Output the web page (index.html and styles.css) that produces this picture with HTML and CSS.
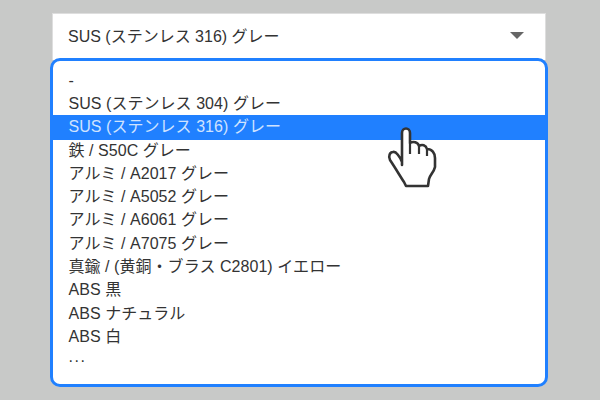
FILE: index.html
```html
<!DOCTYPE html>
<html lang="ja">
<head>
    <meta charset="UTF-8">
    <title>Material select</title>
    <link rel="stylesheet" href="styles.css">
</head>
<body>

<div class="select-box">
    <span>SUS (ステンレス 316) グレー</span>
    <span class="arrow"></span>
</div>

<ul class="option-list">
    <li>-</li>
    <li>SUS (ステンレス 304) グレー</li>
    <li class="selected">SUS (ステンレス 316) グレー</li>
    <li>鉄 / S50C グレー</li>
    <li>アルミ / A2017 グレー</li>
    <li>アルミ / A5052 グレー</li>
    <li>アルミ / A6061 グレー</li>
    <li>アルミ / A7075 グレー</li>
    <li>真鍮 / (黄銅・ブラス C2801) イエロー</li>
    <li>ABS 黒</li>
    <li>ABS ナチュラル</li>
    <li>ABS 白</li>
    <li class="more">...</li>
</ul>

<!-- Hand cursor over the list -->
<svg class="hand" width="80" height="85" viewBox="0 0 80 85">
    <path d="M32 23 C32 17 40 17 40 23 L40 33 C43 31 48 32 49 36 C52 34 56 35 57 39 C62 39 65 43 65 48 L65 57 C64 62 60 65 59 69 L58 76 L36 76 L34 72 C30 66 26 59 20 50 C18 46 20 42 23 42 C26 41 30 47 32 52 L32 55 Z" fill="#fff" stroke="#333" stroke-width="2.6" stroke-linejoin="round"/>
    <path d="M40 33 L40 44 M49 36 L49 44 M57 39 L57 46" fill="none" stroke="#333" stroke-width="2.2"/>
</svg>

</body>
</html>
```

FILE: styles.css
```css
body {
    margin: 0;
    width: 600px;
    height: 400px;
    overflow: hidden;
    position: relative;
    padding-top: 13px;
    box-sizing: border-box;
    background-color: #c8c9c8;
    color: #333;
    font-family: "Liberation Sans", "Noto Sans CJK JP", sans-serif;
    font-size: 16px;
}

.select-box {
    display: flex;
    justify-content: space-between;
    align-items: center;
    width: 494px;
    height: 47px;
    margin-left: 52px;
    padding: 0 21px 4px 15px;
    box-sizing: border-box;
    background-color: #fff;
    border: 1px solid #dedede;
    border-bottom: none;
}

.arrow {
    width: 0;
    height: 0;
    border-left: 7px solid transparent;
    border-right: 7px solid transparent;
    border-top: 7px solid #666;
}

.option-list {
    list-style: none;
    width: 498px;
    height: 329px;
    margin: -2px 0 0 50px;
    padding: 7.7px 0 0;
    box-sizing: border-box;
    background-color: #fff;
    border: 3px solid #2080ff;
    border-radius: 10px;
    position: relative;
}

.option-list li {
    height: 23.3px;
    line-height: 23.3px;
    padding-left: 15.5px;
    letter-spacing: 0.05px;
    white-space: nowrap;
}

.option-list li.selected {
    height: 24.7px;
    margin-bottom: -1.4px;
    background-color: #2080ff;
    color: #cfe3ff;
}

.option-list li.more {
    line-height: 18px;
    letter-spacing: 1.5px;
}

.hand {
    position: absolute;
    left: 370px;
    top: 110px;
}
```
